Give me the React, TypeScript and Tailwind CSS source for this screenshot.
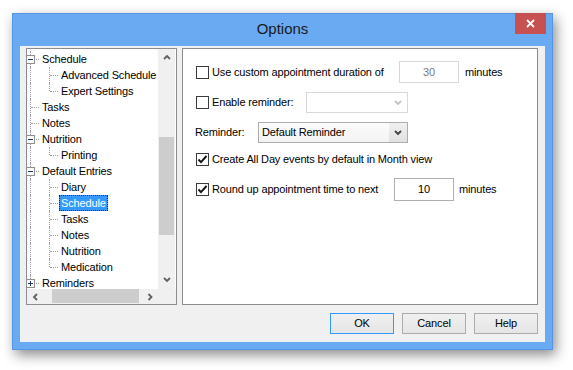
import React from 'react';

type TreeRow = {
  label: string;
  level: 0 | 1;
  box?: '-' | '+';
  last?: boolean;
  end?: boolean;
  selected?: boolean;
};

const rows: TreeRow[] = [
  { label: 'Schedule', level: 0, box: '-' },
  { label: 'Advanced Schedule', level: 1 },
  { label: 'Expert Settings', level: 1, last: true },
  { label: 'Tasks', level: 0 },
  { label: 'Notes', level: 0 },
  { label: 'Nutrition', level: 0, box: '-' },
  { label: 'Printing', level: 1, last: true },
  { label: 'Default Entries', level: 0, box: '-' },
  { label: 'Diary', level: 1 },
  { label: 'Schedule', level: 1, selected: true },
  { label: 'Tasks', level: 1 },
  { label: 'Notes', level: 1 },
  { label: 'Nutrition', level: 1 },
  { label: 'Medication', level: 1, last: true },
  { label: 'Reminders', level: 0, box: '+', end: true },
];

function Chevron({ dir, color = '#606060' }: { dir: 'up' | 'down' | 'left' | 'right'; color?: string }) {
  const d = {
    up: 'M1 5 L4 2 L7 5',
    down: 'M1 2 L4 5 L7 2',
    left: 'M5 1 L2 4 L5 7',
    right: 'M2.5 1 L5.5 4 L2.5 7',
  }[dir];
  return (
    <svg width="8" height="8" viewBox="0 0 8 8" className="block">
      <path d={d} fill="none" stroke={color} strokeWidth="1.8" />
    </svg>
  );
}

function Check({ checked }: { checked?: boolean }) {
  return (
    <span className="w-[13px] h-[13px] shrink-0 border border-[#3c3c3c] bg-white flex items-center justify-center">
      {checked && (
        <svg width="11" height="11" viewBox="0 0 11 11" className="block">
          <path d="M1.5 5.5 L4 8.2 L9.5 2" fill="none" stroke="#111" strokeWidth="1.9" />
        </svg>
      )}
    </span>
  );
}

function Row({ r }: { r: TreeRow }) {
  return (
    <div className="relative h-[16px] flex items-center">
      <span className={`absolute left-[3px] top-0 border-l border-dotted border-[#a0a0a0] ${r.end ? 'h-[8px]' : 'h-[16px]'}`} />
      {r.level === 0 ? (
        <span className="absolute left-[4px] top-[8px] w-[8px] border-t border-dotted border-[#a0a0a0]" />
      ) : (
        <>
          <span className={`absolute left-[22px] top-0 border-l border-dotted border-[#a0a0a0] ${r.last ? 'h-[8px]' : 'h-[16px]'}`} />
          <span className="absolute left-[23px] top-[8px] w-[8px] border-t border-dotted border-[#a0a0a0]" />
        </>
      )}
      {r.box && (
        <span className="absolute left-[-1px] top-[4px] w-[9px] h-[9px] border border-[#919191] bg-white flex items-center justify-center">
          <span className="relative w-[5px] h-[5px] flex items-center justify-center">
            <span className="absolute w-[5px] h-[1px] bg-[#1c3a6e]" />
            {r.box === '+' && <span className="absolute w-[1px] h-[5px] bg-[#1c3a6e]" />}
          </span>
        </span>
      )}
      <div className={r.level === 0 ? 'pl-[13px]' : 'pl-[32px]'}>
        <span
          className={`block h-[16px] leading-[14px] px-[1px] border whitespace-nowrap ${
            r.selected ? 'bg-[#3399ff] text-white border-dotted border-[#2a2a2a]' : 'border-transparent text-black'
          }`}
        >
          {r.label}
        </span>
      </div>
    </div>
  );
}

function TreePanel() {
  return (
    <div className="w-[151px] h-[257px] border border-[#8c8c8c] bg-white flex flex-col">
      <div className="flex h-[240px]">
        <div className="w-[131px] overflow-hidden pt-[2px]">
          {rows.map((r, i) => (
            <Row key={i} r={r} />
          ))}
        </div>
        <div className="w-[17px] bg-[#f0f0f0] flex flex-col items-center">
          <div className="h-[17px] flex items-center justify-center">
            <Chevron dir="up" />
          </div>
          <div className="flex-1 w-full px-[1px]">
            <div className="mt-[71px] h-[98px] bg-[#cdcdcd]" />
          </div>
          <div className="h-[19px] flex items-center justify-center">
            <Chevron dir="down" />
          </div>
        </div>
      </div>
      <div className="flex h-[15px] bg-[#f0f0f0]">
        <div className="w-[131px] flex items-center">
          <div className="w-[17px] flex justify-center">
            <Chevron dir="left" />
          </div>
          <div className="flex-1 h-full pb-[1px]">
            <div className="ml-[8px] w-[87px] h-full bg-[#cdcdcd]" />
          </div>
          <div className="w-[17px] flex justify-center">
            <Chevron dir="right" />
          </div>
        </div>
        <div className="w-[17px] bg-[#f0f0f0]" />
      </div>
    </div>
  );
}

function SettingsPanel() {
  return (
    <div className="w-[356px] h-[257px] border border-[#8c8c8c] bg-white pt-[12px] text-black">
      <div className="flex items-center h-[22px] pl-[13px]">
        <div className="w-[203px] flex items-center gap-[3px]">
          <Check />
          <span>Use custom appointment duration of</span>
        </div>
        <div className="w-[60px] h-[22px] border border-[#d9d9d9] flex items-center justify-center text-[#7a7a7a]">30</div>
        <span className="ml-[6px]">minutes</span>
      </div>

      <div className="flex items-center h-[21px] mt-[9px] pl-[13px]">
        <div className="w-[110px] flex items-center gap-[3px]">
          <Check />
          <span>Enable reminder:</span>
        </div>
        <div className="w-[102px] h-[21px] border border-[#d9d9d9] bg-white flex items-center justify-end pr-[5px]">
          <Chevron dir="down" color="#c4c4c4" />
        </div>
      </div>

      <div className="flex items-center h-[21px] mt-[9px] pl-[12px]">
        <span className="w-[63px]">Reminder:</span>
        <div className="w-[150px] h-[21px] border border-[#acacac] flex">
          <div className="flex-1 bg-gradient-to-b from-[#fbfbfb] to-[#f3f3f3] flex items-center pl-[3px]">Default Reminder</div>
          <div className="w-[18px] bg-gradient-to-b from-[#f0f0f0] to-[#e1e1e1] flex items-center justify-center">
            <Chevron dir="down" color="#404040" />
          </div>
        </div>
      </div>

      <div className="flex items-center h-[16px] mt-[8px] pl-[13px] gap-[3px]">
        <Check checked />
        <span>Create All Day events by default in Month view</span>
      </div>

      <div className="flex items-center h-[22px] mt-[11px] pl-[13px]">
        <div className="w-[198px] flex items-center gap-[3px]">
          <Check checked />
          <span>Round up appointment time to next</span>
        </div>
        <div className="w-[60px] h-[23px] border border-[#abadb3] bg-white flex items-center justify-center">10</div>
        <span className="ml-[5px]">minutes</span>
      </div>
    </div>
  );
}

function Button({ label, primary }: { label: string; primary?: boolean }) {
  return (
    <button
      className={`w-[64px] h-[21px] border bg-gradient-to-b from-[#f0f0f0] to-[#e5e5e5] text-black flex items-center justify-center ${
        primary ? 'border-[#3399ff]' : 'border-[#acacac]'
      }`}
    >
      {label}
    </button>
  );
}

export default function App() {
  return (
    <div className="w-[573px] h-[370px] bg-white pt-[13px] pl-[12px] font-['Liberation_Sans',Arial,sans-serif] text-[11px] tracking-[-0.15px]">
      <div className="w-[541px] h-[337px] bg-[#69aaf3] border border-[#5596e4] flex flex-col shadow-[3px_5px_12px_rgba(0,0,0,0.45)]">
        <div className="relative h-[32px] flex items-center justify-center">
          <span className="text-[15px] tracking-normal text-[#1a1a1a] -mt-[2px]">Options</span>
          <div className="absolute right-[6px] top-[-1px] w-[31px] h-[21px] bg-[#c75050] flex items-center justify-center">
            <svg width="9" height="9" viewBox="0 0 9 9" className="block">
              <path d="M1 1 L8 8 M8 1 L1 8" stroke="#fff" strokeWidth="1.8" />
            </svg>
          </div>
        </div>
        <div className="ml-[7px] mr-[7px] w-[525px] h-[296px] bg-[#f0f0f0] flex flex-col">
          <div className="flex gap-[5px] pt-[2px] pl-[6px]">
            <TreePanel />
            <SettingsPanel />
          </div>
          <div className="flex justify-end gap-[8px] mt-[8px] pr-[7px]">
            <Button label="OK" primary />
            <Button label="Cancel" />
            <Button label="Help" />
          </div>
        </div>
      </div>
    </div>
  );
}
